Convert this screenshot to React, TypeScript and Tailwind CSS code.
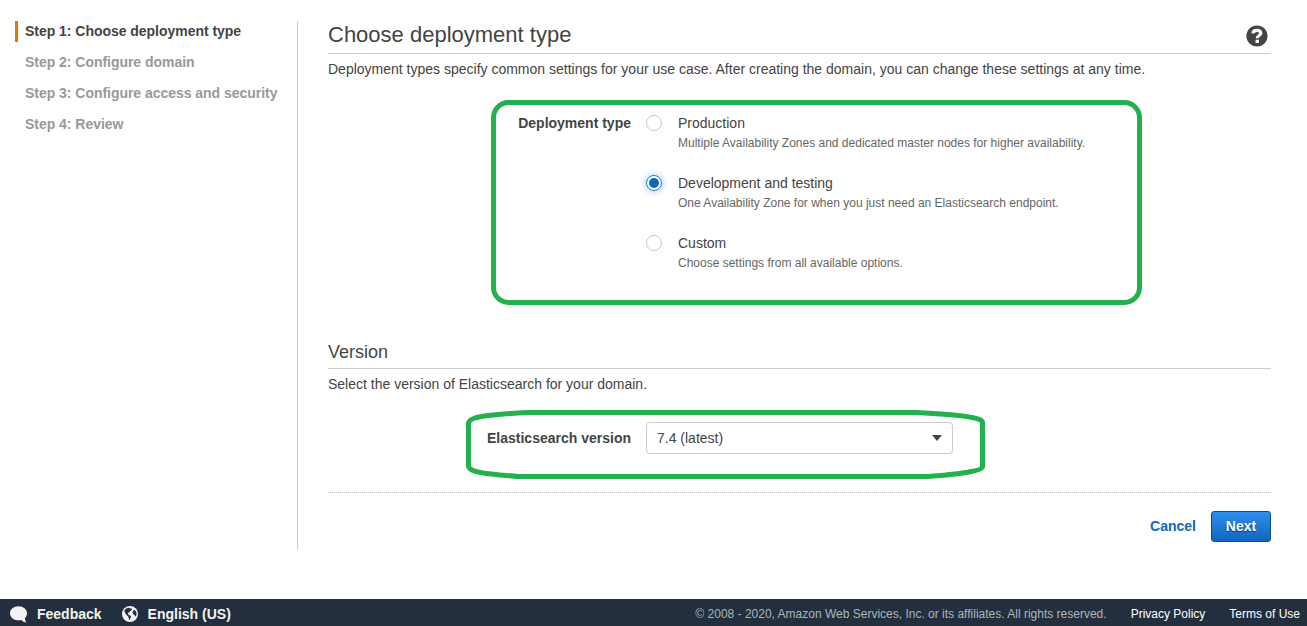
import React from 'react';

const steps = [
  'Step 1: Choose deployment type',
  'Step 2: Configure domain',
  'Step 3: Configure access and security',
  'Step 4: Review',
];

const options = [
  {
    title: 'Production',
    text: 'Multiple Availability Zones and dedicated master nodes for higher availability.',
  },
  {
    title: 'Development and testing',
    text: 'One Availability Zone for when you just need an Elasticsearch endpoint.',
  },
  { title: 'Custom', text: 'Choose settings from all available options.' },
];

function Radio({ checked }: { checked: boolean }) {
  return checked ? (
    <span className="flex size-4 shrink-0 items-center justify-center rounded-full border border-[#1f7ddb] bg-white shadow-[0_0_6px_1px_#a9d0f8]">
      <span className="size-2.5 rounded-full bg-[#1166bb]" />
    </span>
  ) : (
    <span className="size-4 shrink-0 rounded-full border border-[#c8c8c8] bg-white" />
  );
}

function HelpIcon() {
  return (
    <svg className="size-[22px]" viewBox="0 0 22 22" aria-hidden="true">
      <circle cx="11" cy="11" r="10.6" fill="#444" />
      <path d="M6.900 8.400C7.200 6 8.800 5.400 10.800 5.400c2.300 0 4 .9 4 2.900 0 2.200-3.600 2.200-3.600 5" fill="none" stroke="#fff" strokeWidth="3.200" />
      <path d="M9.500 14.700h3.400v3.200H9.500z" fill="#fff" />
    </svg>
  );
}

function CommentIcon() {
  return (
    <svg className="h-[17px] w-[18px]" viewBox="0 0 18 17" aria-hidden="true">
      <path
        d="M8.500.2C13.200.2 17 3.200 17 7.200c0 2-.8 3.700-2.200 5 .1 1.500.6 2.900 1.700 4.200-2.200-.1-3.900-.9-5.100-2.400-.9.200-1.900.300-2.900.300C3.700 14.300 0 11.200 0 7.200S3.700.2 8.500.2z"
        fill="#f3f3f3"
      />
    </svg>
  );
}

function GlobeIcon() {
  return (
    <svg className="size-4" viewBox="0 0 16 16" aria-hidden="true">
      <circle cx="8" cy="8" r="8" fill="#f3f3f3" />
      <path d="M2.200 4.600 4.200 2.500 6.600 1.800 8.200 2.600 9.600 2.300 9.900 3.900 8.400 4.900 7.100 6.600 5.700 7 6.200 8.500 8.100 9.400 9.300 10.700 8.300 12.300 7.700 14.200 6.700 12.600 6.400 10.700 4.800 9.200 3.300 7.200z" fill="#232f3e" />
      <path d="M11.300 4.600 12.800 3.900 14.300 6 14.600 8.600 13.500 10.700 12.500 8.900 11 8 10.600 6.200z" fill="#232f3e" />
    </svg>
  );
}

export default function App() {
  return (
    <div className="flex h-[626px] flex-col overflow-hidden bg-white font-['Liberation_Sans',Arial,sans-serif] text-sm leading-5 text-[#444]">
      <div className="flex flex-1 pt-[21px]">
        <nav className="flex h-[529px] w-[298px] shrink-0 flex-col gap-2.5 border-r border-[#ccc] pl-[15px] font-bold tracking-[-0.033px]">
          {steps.map((step, i) => (
            <div
              key={step}
              className={
                i === 0
                  ? 'h-[21px] border-l-[3px] border-[#e07700] pl-[7px] text-[#444]'
                  : 'h-[21px] border-l-[3px] border-transparent pl-[7px] text-[#999]'
              }
            >
              {step}
            </div>
          ))}
        </nav>

        <main className="ml-[30px] w-[943px]">
          <header className="flex h-[33px] justify-between border-b border-[#ccc]">
            <h1 className="text-[22px] leading-[27px]">Choose deployment type</h1>
            <span className="mt-1 mr-[3px]">
              <HelpIcon />
            </span>
          </header>
          <p className="mt-[5px]">
            Deployment types specify common settings for your use case. After creating the domain, you can change
            these settings at any time.
          </p>

          <section className="relative mt-[34px] flex h-[228px]">
            <div className="w-[303px] text-right font-bold">Deployment type</div>
            <div className="ml-[15px] flex flex-col">
              {options.map((option, i) => (
                <div key={option.title} className="flex h-[60px] gap-4">
                  <span className="mt-0.5">
                    <span className="flex">
                      <Radio checked={i === 1} />
                    </span>
                  </span>
                  <div>
                    <div>{option.title}</div>
                    <div className="text-xs leading-5 text-[#666]">{option.text}</div>
                  </div>
                </div>
              ))}
            </div>
            <svg
              className="pointer-events-none absolute top-[-13px] left-[163px] h-[205px] w-[651px]"
              viewBox="0 0 651 205"
              fill="none"
              aria-hidden="true"
            >
              <rect x="2.500" y="2.500" width="646" height="200" rx="15" stroke="#22b14c" strokeWidth="5" />
            </svg>
          </section>

          <h2 className="h-[28px] border-b border-[#ccc] text-lg leading-[22px]">Version</h2>
          <p className="mt-[5px]">Select the version of Elasticsearch for your domain.</p>

          <section className="relative mt-7 flex h-[70px] items-start">
            <div className="w-[303px] pt-1.5 text-right font-bold">Elasticsearch version</div>
            <div className="ml-[15px] flex h-8 w-[307px] items-center justify-between rounded-[4px] border border-[#ccc] pr-2.5 pl-2.5">
              <span>7.4 (latest)</span>
              <svg className="h-1.5 w-2.5" viewBox="0 0 10 6" aria-hidden="true">
                <path d="M0 0h10L5 6z" fill="#444" />
              </svg>
            </div>
            <svg
              className="pointer-events-none absolute top-[-12px] left-[138px] h-[69px] w-[519px]"
              viewBox="0 0 519 69"
              fill="none"
              aria-hidden="true"
            >
              <path
                d="M62 2.500H450C472 3.500 505 5 514.500 10Q516.500 11 516.500 13V57Q515 60 505 61.500C492 64.500 475 65.500 461 66.500H52C38 65 15 64.500 6 60Q2.500 58 2.500 56V13Q3 10 9 8C22 4.500 42 3.500 62 2.500z"
                stroke="#22b14c"
                strokeWidth="5"
                strokeLinejoin="round"
              />
            </svg>
          </section>

          <div className="flex h-[50px] items-end justify-end gap-[15px] border-t border-dotted border-[#bbb]">
            <a className="mb-1.5 font-bold text-[#1166bb]">Cancel</a>
            <button className="h-[31px] w-[60px] rounded-[3px] border border-[#124a86] bg-linear-to-b from-[#2f8ded] to-[#1166bb] pb-0.5 text-center font-bold text-white [text-shadow:0_1px_1px_#083863]">
              Next
            </button>
          </div>
        </main>
      </div>

      <footer className="flex h-[27px] shrink-0 items-center bg-[#232f3e] pt-[3px] pr-[7px] pl-2.5 text-xs text-white">
        <CommentIcon />
        <span className="ml-[9px] text-sm font-bold text-[#f3f3f3]">Feedback</span>
        <span className="ml-5">
          <GlobeIcon />
        </span>
        <span className="ml-[10px] text-sm font-bold text-[#f3f3f3]">English (US)</span>
        <span className="ml-auto text-[#aab7b8]">
          © 2008 - 2020, Amazon Web Services, Inc. or its affiliates. All rights reserved.
        </span>
        <span className="ml-6">Privacy Policy</span>
        <span className="ml-6">Terms of Use</span>
      </footer>
    </div>
  );
}
